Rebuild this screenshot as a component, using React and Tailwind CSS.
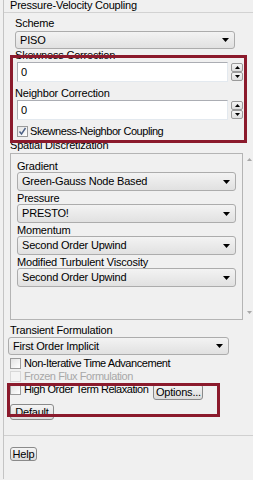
import React from "react";

const Arrow = ({ up }) => (
  <svg width="7" height="4" viewBox="0 0 7 4" className="shrink-0">
    <path d={up ? "M0 4h7L3.5 0z" : "M0 0h7L3.5 4z"} fill="#000" />
  </svg>
);

const Select = ({ value, className = "" }) => (
  <div
    className={`flex items-center justify-between rounded-[3px] border border-[#acacac] bg-gradient-to-b from-[#f3f3f3] to-[#e1e1e1] pl-[4px] pr-[5px] leading-[13px] ${className}`}
  >
    <span>{value}</span>
    <Arrow />
  </div>
);

const SpinInput = ({ value }) => (
  <div className="ml-[2px] flex h-[20px] items-stretch gap-[3px]">
    <div className="w-[211px] border border-[#abadb3] border-r-[#e3e9ef] border-b-[#e3e9ef] bg-white pl-[3px] pt-[3px] leading-[13px]">
      {value}
    </div>
    <div className="flex w-[12px] flex-col justify-between py-[1px]">
      <div className="flex h-[9px] items-center justify-center rounded-[2px] border border-[#9a9a9a] bg-gradient-to-b from-[#f5f5f5] to-[#dedede]">
        <svg width="5" height="3" viewBox="0 0 5 3">
          <path d="M0 3h5L2.5 0z" fill="#000" />
        </svg>
      </div>
      <div className="flex h-[9px] items-center justify-center rounded-[2px] border border-[#9a9a9a] bg-gradient-to-b from-[#f5f5f5] to-[#dedede]">
        <svg width="5" height="3" viewBox="0 0 5 3">
          <path d="M0 0h5L2.5 3z" fill="#000" />
        </svg>
      </div>
    </div>
  </div>
);

const Box = ({ checked, disabled }) => (
  <div
    className={`flex h-[11px] w-[11px] shrink-0 items-center justify-center border ${
      disabled ? "border-[#d8d8d8] bg-[#f4f4f4]" : "border-[#9a9a9a] bg-gradient-to-br from-[#e2e2e2] to-white"
    }`}
  >
    {checked && (
      <svg width="9" height="9" viewBox="0 0 9 9">
        <path d="M1.5 4.5l2 2.5 4-6" stroke="#4d6185" strokeWidth="1.4" fill="none" />
      </svg>
    )}
  </div>
);

const Button = ({ children, className = "" }) => (
  <div
    className={`flex items-center justify-center rounded-[3px] border border-[#8a8a8a] bg-gradient-to-b from-[#f4f4f4] to-[#dcdcdc] leading-[12px] ${className}`}
  >
    {children}
  </div>
);

export default function App() {
  const spatial = [
    { label: "Gradient", value: "Green-Gauss Node Based" },
    { label: "Pressure", value: "PRESTO!" },
    { label: "Momentum", value: "Second Order Upwind" },
    { label: "Modified Turbulent Viscosity", value: "Second Order Upwind" },
  ];

  return (
    <div className="relative h-[480px] w-[253px] overflow-hidden bg-[#f0f0f0] font-['Liberation_Sans',Arial,sans-serif] text-[11px] tracking-[-0.2px] text-black">
      <div className="ml-[3px] h-full border-l border-[#c4c4c4]">
        {/* Pressure-Velocity Coupling */}
        <div className="mt-[-1px] pl-[6px] leading-[13px]">Pressure-Velocity Coupling</div>
        <div className="border-t border-[#d2d2d2] pl-[11px]">
          <div className="mt-[4px] leading-[13px]">Scheme</div>
          <Select value="PISO" className="mt-[1px] h-[18px] w-[220px]" />
          <div className="leading-[13px]">Skewness Correction</div>
          <SpinInput value="0" />
          <div className="mt-[5px] leading-[13px]">Neighbor Correction</div>
          <SpinInput value="0" />
          <div className="ml-[2px] mt-[5px] flex h-[12px] items-center gap-[2px]">
            <Box checked />
            <span className="text-[11px] tracking-[-0.45px]">Skewness-Neighbor Coupling</span>
          </div>
        </div>

        {/* Spatial Discretization */}
        <div className="mt-[2px] pl-[6px] leading-[13px]">Spatial Discretization</div>
        <div className="mt-[1px] flex">
          <div className="ml-[6px] h-[167px] w-[233px] border border-[#b4b4b4] pl-[6px] pt-[6px]">
            {spatial.map((s, i) => (
              <div key={i} className={i > 0 ? "mt-[1px]" : ""}>
                <div className="leading-[12px]">{s.label}</div>
                <Select value={s.value} className="h-[19px] w-[219px]" />
              </div>
            ))}
          </div>
          <div className="flex w-[10px] flex-col items-center justify-between pb-[6px] pl-[3px] pt-[5px]">
            <svg width="5" height="3" viewBox="0 0 5 3">
              <path d="M0 3h5L2.5 0z" fill="#a8a8a8" />
            </svg>
            <svg width="5" height="3" viewBox="0 0 5 3">
              <path d="M0 0h5L2.5 3z" fill="#a8a8a8" />
            </svg>
          </div>
        </div>

        {/* Transient Formulation */}
        <div className="mt-[4px] pl-[6px] leading-[13px]">Transient Formulation</div>
        <Select value="First Order Implicit" className="ml-[4px] h-[18px] w-[221px]" />
        <div className="ml-[6px] mt-[2px] flex h-[13px] items-center gap-[3px]">
          <Box />
          <span className="tracking-[-0.45px]">Non-Iterative Time Advancement</span>
        </div>
        <div className="ml-[6px] flex h-[13px] items-center gap-[3px] text-[#a8a8a8]">
          <Box disabled />
          <span className="tracking-[-0.45px]">Frozen Flux Formulation</span>
        </div>
        <div className="ml-[6px] flex items-start">
          <div className="flex h-[13px] items-center gap-[3px]">
            <Box />
            <span className="tracking-[-0.45px]">High Order Term Relaxation</span>
          </div>
          <Button className="ml-[5px] mt-[1px] h-[16px] w-[50px]">Options...</Button>
        </div>
        <Button className="ml-[6px] mt-[4px] h-[16px] w-[44px]">Default</Button>

        <div className="mt-[15px] border-t border-[#d0d0d0]" />
        <Button className="ml-[6px] mt-[11px] h-[14px] w-[27px]">Help</Button>
      </div>

      {/* annotation highlights */}
      <div className="pointer-events-none absolute left-[10px] top-[55px] h-[88px] w-[237px] border-[3px] border-[#8b1a2c]" />
      <div className="pointer-events-none absolute left-[7px] top-[383px] h-[34px] w-[213px] border-[3px] border-[#8b1a2c]" />
    </div>
  );
}
